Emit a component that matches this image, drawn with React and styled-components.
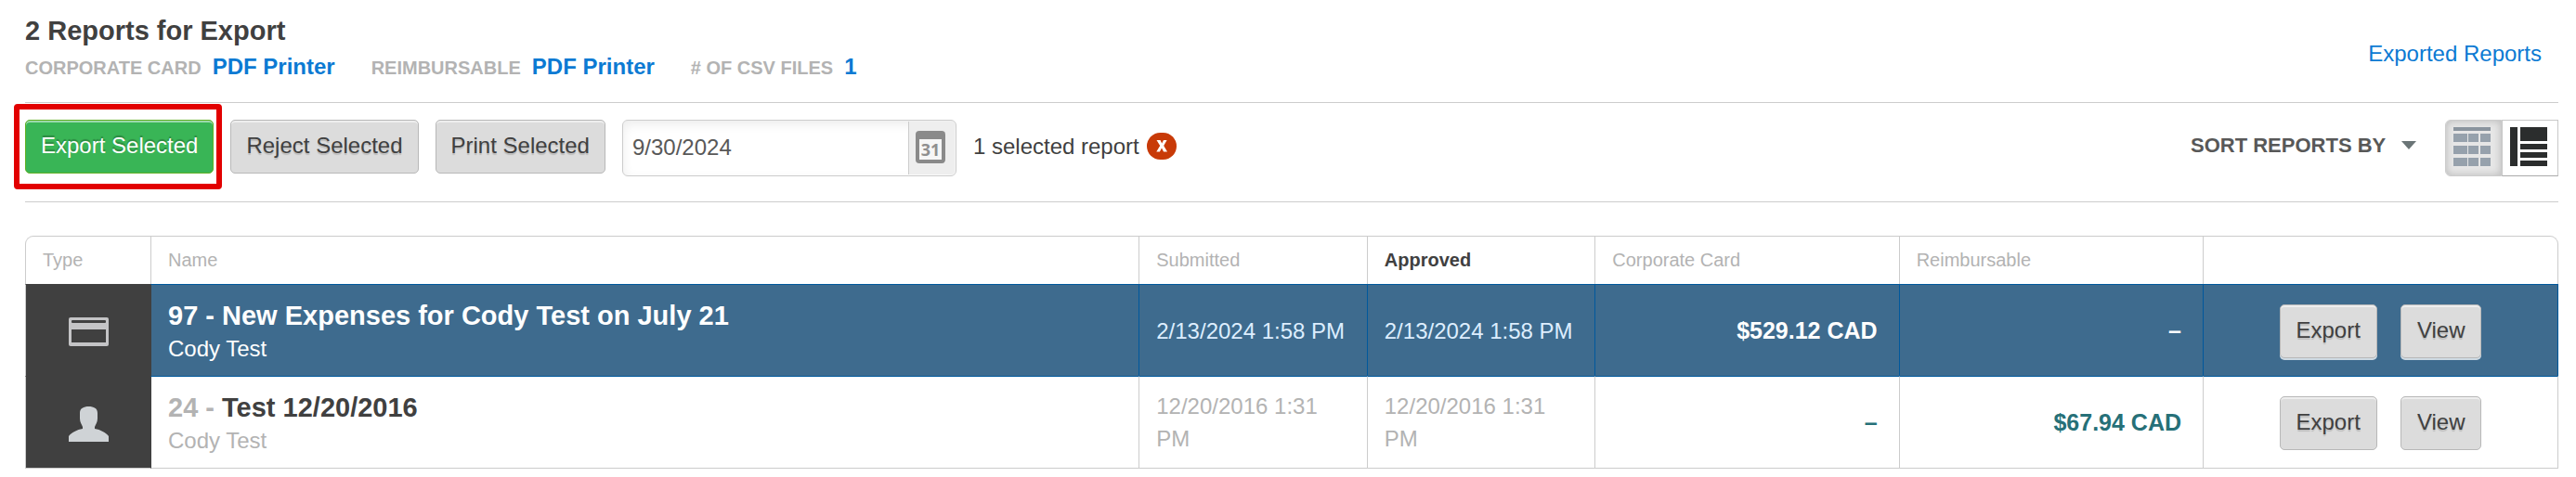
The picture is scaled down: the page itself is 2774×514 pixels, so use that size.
import React, { useState } from 'react';
import styled, { createGlobalStyle } from 'styled-components';

const GlobalStyle = createGlobalStyle`
  body {
    margin: 0;
    background-color: #ffffff;
    color: #404040;
    font-family: "Liberation Sans", Arial, sans-serif;
    font-size: 24px;
    line-height: 35px;
  }

  *, *::before, *::after {
    box-sizing: border-box;
  }

  button, input, select {
    font-family: inherit;
    font-size: inherit;
    color: inherit;
    margin: 0;
  }
`;

const Page = styled.main`
  padding: 14px 19px 10px 27px;
`;

const Header = styled.header`
  display: flex;
  justify-content: space-between;
  align-items: center;
  padding-bottom: 18px;
  border-bottom: 1px solid #cccccc;
`;

const Title = styled.h1`
  margin: 0;
  font-size: 29px;
  line-height: 39px;
`;

const Summary = styled.dl`
  display: flex;
  align-items: baseline;
  margin: 0;
  font-weight: bold;
  line-height: 37px;
`;

const SummaryItem = styled.div`
  display: flex;
  align-items: baseline;
  gap: 12px;
  margin-right: 39px;
`;

const SummaryLabel = styled.dt`
  font-size: 20px;
  color: #b3b3b3;
`;

const SummaryValue = styled.dd`
  margin: 0;
`;

const Link = styled.a`
  color: #0c7ad3;
  text-decoration: none;
`;

const HeaderAside = styled.div`
  padding: 8px 18px 0 0;
`;

const Toolbar = styled.div`
  display: flex;
  justify-content: space-between;
  align-items: flex-start;
  padding: 18px 0 27px;
  border-bottom: 1px solid #cccccc;
`;

const ToolbarGroup = styled.div`
  display: flex;
  align-items: flex-start;
  gap: ${(props) => props.$gap};
`;

const Button = styled.button`
  display: block;
  height: 58px;
  padding: 0 ${(props) => (props.$small ? '17px' : '16px')} 2px;
  border: 1px solid ${(props) => (props.$primary ? '#5fb024' : '#b8b8b8')};
  border-radius: 5px;
  background-color: ${(props) => (props.$primary ? '#39b556' : '#dcdcdc')};
  color: ${(props) => (props.$primary ? '#ffffff' : '#404040')};
  text-shadow: ${(props) =>
    props.$primary ? '0 -2px 1px rgba(0, 0, 0, 0.25)' : '0 2px 1px rgba(0, 0, 0, 0.15)'};
  box-shadow:
    inset 0 2px 0 rgba(255, 255, 255, 0.5),
    0 2px 0 rgba(255, 255, 255, 0.75);
  white-space: nowrap;
  cursor: pointer;
`;

const Highlight = styled.div`
  position: relative;

  &::after {
    content: '';
    position: absolute;
    inset: -17px -9px -17px -12px;
    border: 6px solid #e20000;
    border-radius: 4px;
    pointer-events: none;
  }
`;

const DateField = styled.div`
  display: flex;
  width: 360px;
  height: 61px;
  padding: 1px;
  border: 1px solid #cccccc;
  border-radius: 6px;
  box-shadow: inset 0 4px 12px rgba(0, 0, 0, 0.08);
`;

const DateInput = styled.input`
  flex: 1;
  min-width: 0;
  padding: 0 9px 2px;
  border: 0;
  background: transparent;
  color: #585858;
`;

const CalendarButton = styled.button`
  display: flex;
  align-items: center;
  justify-content: center;
  width: 50px;
  padding: 0 3px 2px 0;
  border: 0;
  border-left: 1px solid #cccccc;
  border-radius: 0 4px 4px 0;
  background-color: #eeeeee;
  cursor: pointer;
`;

const Selection = styled.div`
  display: flex;
  align-items: center;
  gap: 8px;
  height: 58px;
  padding-bottom: 2px;
`;

const ClearButton = styled.button`
  display: flex;
  padding: 0;
  border: 0;
  background: none;
  cursor: pointer;
`;

const Sort = styled.label`
  display: flex;
  align-items: center;
  gap: 16px;
  height: 55px;
  color: #585858;
`;

const SortSelect = styled.select`
  appearance: none;
  padding: 0;
  border: 0;
  background: transparent;
  font-size: 22px;
  font-weight: bold;
`;

const ViewToggle = styled.div`
  display: flex;
`;

const ViewButton = styled.button`
  display: flex;
  align-items: center;
  justify-content: center;
  width: 61px;
  height: 61px;
  padding: 0 3px 4px 0;
  border: 1px solid #c8c8c8;
  border-bottom-color: #aaaaaa;
  border-radius: 0;
  background-color: #ffffff;
  cursor: pointer;

  &[aria-pressed='true'] {
    border-color: #cccccc;
    border-radius: 6px 0 0 6px;
    background-color: #e6e6e6;
    box-shadow: inset 0 0 8px rgba(0, 0, 0, 0.2);
  }
`;

const Table = styled.table`
  width: 100%;
  margin-top: 36px;
  table-layout: fixed;
  border-collapse: separate;
  border-spacing: 0;
`;

const Col = styled.col`
  width: ${(props) => props.$width};
`;

const HeadCell = styled.th`
  height: 52px;
  padding: 0 18px;
  border: 1px solid #cccccc;
  border-width: 1px 0 0 1px;
  font-size: 20px;
  font-weight: ${(props) => (props.$sorted ? 'bold' : 'normal')};
  color: ${(props) => (props.$sorted ? '#404040' : '#b3b3b3')};
  text-align: left;

  &:first-child {
    border-top-left-radius: 9px;
  }

  &:last-child {
    border-right-width: 1px;
    border-top-right-radius: 9px;
  }
`;

const Cell = styled.td`
  height: 99px;
  padding: 0 18px;
  border: 1px solid #cccccc;
  border-width: 1px 0 0 1px;
  color: #b3b3b3;

  &:last-child {
    border-right-width: 1px;
  }
`;

const TypeCell = styled(Cell)`
  padding-top: 3px;
  background-color: #404040;
  background-clip: padding-box;
  border-top-color: #404040;
  text-align: center;
  line-height: 0;
`;

const NameCell = styled(Cell)`
  padding-top: 3px;
  border-left-color: #404040;
  line-height: 36px;
`;

const AmountCell = styled(Cell)`
  padding-right: 23px;
  font-size: 25px;
  font-weight: bold;
  color: #267078;
  text-align: right;
`;

const Row = styled.tr`
  &:last-child ${Cell} {
    height: 100px;
    border-bottom-width: 1px;
  }

  &[aria-selected='true'] ${Cell}:not(${TypeCell}) {
    background-color: #3e6b8e;
    border-color: #00589c;
    color: #ddeeff;
  }

  &[aria-selected='true'] ${NameCell}${Cell}:not(${TypeCell}) {
    border-left-color: #404040;
    color: #ffffff;
  }

  &[aria-selected='true'] ${AmountCell}${Cell}:not(${TypeCell}) {
    color: #ffffff;
  }

  &[aria-selected='true'] + tr ${Cell}:not(${TypeCell}) {
    border-top-color: #00589c;
  }
`;

const ReportName = styled.div`
  font-size: 29px;
  font-weight: bold;
`;

const ReportTitle = styled.span`
  color: ${(props) => (props.$selected ? '#ffffff' : '#404040')};
`;

const Actions = styled.div`
  display: flex;
  justify-content: center;
  gap: 25px;
  padding-top: 2px;
`;

const CalendarIcon = () => (
  <svg width="32" height="35" viewBox="0 0 32 35" aria-hidden="true">
    <rect width="32" height="35" rx="4" fill="#8a8a8a" />
    <rect x="4" y="9" width="24" height="22" fill="#f6f6f6" />
    <text
      x="16"
      y="27"
      textAnchor="middle"
      fontFamily="Open Sans"
      fontSize="18"
      fontWeight="bold"
      fill="#8f8f8f"
    >
      31
    </text>
  </svg>
);

const ClearIcon = () => (
  <svg width="32" height="29" viewBox="0 0 32 29" aria-hidden="true">
    <rect width="32" height="29" rx="14.5" fill="#c83a08" />
    <path d="M10.500 8h4l1.700 3.600L18 8h3.600l-3.400 6 3.800 6.500h-4l-2-4-2.100 4h-3.600l3.900-6.500z" fill="#ffffff" />
  </svg>
);

const ArrowIcon = () => (
  <svg width="16" height="9" viewBox="0 0 16 9" aria-hidden="true">
    <path d="M0 0h16L8 9z" fill="#6b7577" />
  </svg>
);

const GridIcon = () => (
  <svg width="40" height="42" viewBox="0 0 40 42" aria-hidden="true">
    <rect width="40" height="4" fill="#8a949e" />
    {[7, 20, 33].map((y) => (
      <g key={y} fill="#96a1ac">
        <rect y={y} width="15" height="9" />
        <rect x="16" y={y} width="11" height="9" />
        <rect x="29" y={y} width="11" height="9" />
      </g>
    ))}
  </svg>
);

const ListIcon = () => (
  <svg width="40" height="42" viewBox="0 0 40 42" aria-hidden="true" fill="#2b2d2d">
    <rect width="8" height="42" />
    <rect x="11" width="29" height="15" />
    <rect x="11" y="18" width="29" height="6" />
    <rect x="11" y="27" width="29" height="6" />
    <rect x="11" y="36" width="29" height="6" />
  </svg>
);

const CardIcon = () => (
  <svg width="43" height="31" viewBox="0 0 43 31" role="img" aria-label="Corporate card">
    <rect width="43" height="31" rx="2" fill="#c4c4c6" />
    <rect x="3" y="3" width="37" height="3" rx="1" fill="#404040" />
    <rect x="3" y="13" width="37" height="14" fill="#404040" />
  </svg>
);

const PersonIcon = () => (
  <svg width="43" height="38" viewBox="0 0 43 38" role="img" aria-label="Reimbursable">
    <path
      d="M21.500 0C27 0 31 2 31 7v6c0 4-2 6-3 9v2c6 1 12 4 15 8v6H0v-6c3-4 9-7 15-8v-2c-1-3-3-5-3-9V7c0-5 4-7 9.500-7z"
      fill="#cfd3d6"
    />
  </svg>
);

const reports = [
  {
    number: 97,
    title: 'New Expenses for Cody Test on July 21',
    owner: 'Cody Test',
    submitted: '2/13/2024 1:58 PM',
    approved: '2/13/2024 1:58 PM',
    corporate: '$529.12 CAD',
    reimbursable: '–',
    icon: <CardIcon />,
    selected: true,
  },
  {
    number: 24,
    title: 'Test 12/20/2016',
    owner: 'Cody Test',
    submitted: '12/20/2016 1:31 PM',
    approved: '12/20/2016 1:31 PM',
    corporate: '–',
    reimbursable: '$67.94 CAD',
    icon: <PersonIcon />,
    selected: false,
  },
];

const summary = [
  { label: 'CORPORATE CARD', value: 'PDF Printer' },
  { label: 'REIMBURSABLE', value: 'PDF Printer' },
  { label: '# OF CSV FILES', value: '1' },
];

const App = () => {
  const [date, setDate] = useState('9/30/2024');
  const [view, setView] = useState('grid');

  return (
    <>
      <GlobalStyle />
      <Page>
        <Header>
          <div>
            <Title>2 Reports for Export</Title>
            <Summary>
              {summary.map((item) => (
                <SummaryItem key={item.label}>
                  <SummaryLabel>{item.label}</SummaryLabel>
                  <SummaryValue>
                    <Link href="#settings">{item.value}</Link>
                  </SummaryValue>
                </SummaryItem>
              ))}
            </Summary>
          </div>
          <HeaderAside>
            <Link href="#exported">Exported Reports</Link>
          </HeaderAside>
        </Header>

        <Toolbar>
          <ToolbarGroup $gap="18px">
            <Highlight>
              <Button type="button" $primary>Export Selected</Button>
            </Highlight>
            <Button type="button">Reject Selected</Button>
            <Button type="button">Print Selected</Button>
            <DateField>
              <DateInput
                type="text"
                aria-label="Export date"
                value={date}
                onChange={(e) => setDate(e.target.value)}
              />
              <CalendarButton type="button" aria-label="Choose date">
                <CalendarIcon />
              </CalendarButton>
            </DateField>
            <Selection>
              1 selected report
              <ClearButton type="button" aria-label="Clear selection">
                <ClearIcon />
              </ClearButton>
            </Selection>
          </ToolbarGroup>
          <ToolbarGroup $gap="31px">
            <Sort>
              <SortSelect aria-label="Sort reports by" defaultValue="">
                <option value="">SORT REPORTS BY</option>
                <option value="name">Name</option>
                <option value="submitted">Submitted</option>
                <option value="approved">Approved</option>
              </SortSelect>
              <ArrowIcon />
            </Sort>
            <ViewToggle>
              <ViewButton
                type="button"
                aria-label="Grid view"
                aria-pressed={view === 'grid'}
                onClick={() => setView('grid')}
              >
                <GridIcon />
              </ViewButton>
              <ViewButton
                type="button"
                aria-label="List view"
                aria-pressed={view === 'list'}
                onClick={() => setView('list')}
              >
                <ListIcon />
              </ViewButton>
            </ViewToggle>
          </ToolbarGroup>
        </Toolbar>

        <Table>
          <colgroup>
            <Col $width="135px" />
            <Col />
            <Col $width="9%" />
            <Col $width="9%" />
            <Col $width="12%" />
            <Col $width="12%" />
            <Col $width="383px" />
          </colgroup>
          <thead>
            <tr>
              <HeadCell>Type</HeadCell>
              <HeadCell>Name</HeadCell>
              <HeadCell>Submitted</HeadCell>
              <HeadCell $sorted>Approved</HeadCell>
              <HeadCell>Corporate Card</HeadCell>
              <HeadCell>Reimbursable</HeadCell>
              <HeadCell aria-label="Actions" />
            </tr>
          </thead>
          <tbody>
            {reports.map((report) => (
              <Row key={report.number} aria-selected={report.selected}>
                <TypeCell>{report.icon}</TypeCell>
                <NameCell>
                  <ReportName>
                    {report.number} -{' '}
                    <ReportTitle $selected={report.selected}>{report.title}</ReportTitle>
                  </ReportName>
                  {report.owner}
                </NameCell>
                <Cell>{report.submitted}</Cell>
                <Cell>{report.approved}</Cell>
                <AmountCell>{report.corporate}</AmountCell>
                <AmountCell>{report.reimbursable}</AmountCell>
                <Cell>
                  <Actions>
                    <Button type="button" $small>Export</Button>
                    <Button type="button" $small>View</Button>
                  </Actions>
                </Cell>
              </Row>
            ))}
          </tbody>
        </Table>
      </Page>
    </>
  );
};

export default App;
